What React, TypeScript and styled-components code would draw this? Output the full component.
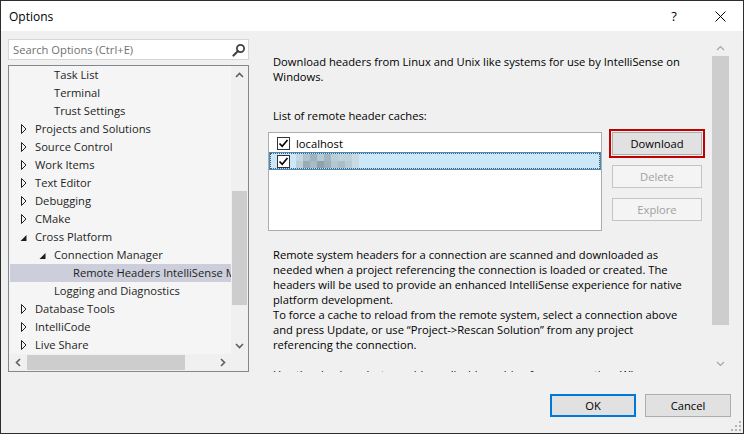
import React from 'react'
import styled, { createGlobalStyle } from 'styled-components'

const GlobalStyle = createGlobalStyle`
  html, body {
    margin: 0;
    padding: 0;
    background: #f0f0f0;
  }
  body {
    font-family: "Open Sans", "Noto Sans", sans-serif;
    font-size: 11.2px;
    color: #000;
  }
  * {
    box-sizing: border-box;
  }
`

type TreeItem = {
  label: string
  level: number
  arrow?: 'open' | 'closed'
  selected?: boolean
}

const treeItems: TreeItem[] = [
  { label: 'Task List', level: 1 },
  { label: 'Terminal', level: 1 },
  { label: 'Trust Settings', level: 1 },
  { label: 'Projects and Solutions', level: 0, arrow: 'closed' },
  { label: 'Source Control', level: 0, arrow: 'closed' },
  { label: 'Work Items', level: 0, arrow: 'closed' },
  { label: 'Text Editor', level: 0, arrow: 'closed' },
  { label: 'Debugging', level: 0, arrow: 'closed' },
  { label: 'CMake', level: 0, arrow: 'closed' },
  { label: 'Cross Platform', level: 0, arrow: 'open' },
  { label: 'Connection Manager', level: 1, arrow: 'open' },
  { label: 'Remote Headers IntelliSense Manager', level: 2, selected: true },
  { label: 'Logging and Diagnostics', level: 1 },
  { label: 'Database Tools', level: 0, arrow: 'closed' },
  { label: 'IntelliCode', level: 0, arrow: 'closed' },
  { label: 'Live Share', level: 0, arrow: 'closed' },
]

// blurred host name, two rows of mosaic tiles
const mosaic = [
  '#c4d8e2', '#b0c4cf', '#9fb3be', '#b6cad4', '#a3b6c0', '#b9cdd7', '#c0d3dd', '#bdd1db', '#c6dae4',
  '#bccfd9', '#98acb7', '#a8bcc6', '#8fa3ae', '#9db1bc', '#b3c7d1', '#aabec8', '#b8ccd6', '#c8dbe5',
]

const App: React.FC = () => {
  return (
    <>
      <GlobalStyle />
      <Window>
        <TitleBar>
          <Title>Options</Title>
          <CaptionButton>?</CaptionButton>
          <CaptionButton>
            <svg width="11" height="11" viewBox="0 0 11 11">
              <path d="M0.5 0.5 L10.5 10.5 M10.5 0.5 L0.5 10.5" stroke="#000" strokeWidth="1" />
            </svg>
          </CaptionButton>
        </TitleBar>

        <Main>
          <LeftColumn>
            <SearchBox>
              <SearchText>Search Options (Ctrl+E)</SearchText>
              <svg width="14" height="14" viewBox="0 0 14 14">
                <circle cx="8.5" cy="5.5" r="3.6" fill="none" stroke="#424242" strokeWidth="1.8" />
                <path d="M6 8 L1.5 12.5" stroke="#424242" strokeWidth="2.2" strokeLinecap="round" />
              </svg>
            </SearchBox>

            <Tree>
              <TreeRows>
                {treeItems.map((it) => (
                  <TreeRow key={it.label} $level={it.level} $selected={!!it.selected}>
                    <ArrowBox>
                      {it.arrow === 'closed' && (
                        <svg width="16" height="18" viewBox="0 0 16 18">
                          <path d="M2.5 4.5 L7 9 L2.5 13.5 Z" fill="none" stroke="#1e1e1e" strokeWidth="1" />
                        </svg>
                      )}
                      {it.arrow === 'open' && (
                        <svg width="16" height="18" viewBox="0 0 16 18">
                          <path d="M7.5 7 L7.5 13 L1.5 13 Z" fill="#1e1e1e" />
                        </svg>
                      )}
                    </ArrowBox>
                    <TreeLabel>{it.label}</TreeLabel>
                  </TreeRow>
                ))}
              </TreeRows>

              <VScroll>
                <ScrollBtn>
                  <svg width="9" height="6" viewBox="0 0 9 6">
                    <path d="M1 5 L4.5 1.5 L8 5" fill="none" stroke="#606060" strokeWidth="1.6" />
                  </svg>
                </ScrollBtn>
                <VTrack>
                  <VThumb $offset={108} $size={114} />
                </VTrack>
                <ScrollBtn>
                  <svg width="9" height="6" viewBox="0 0 9 6">
                    <path d="M1 1 L4.5 4.5 L8 1" fill="none" stroke="#606060" strokeWidth="1.6" />
                  </svg>
                </ScrollBtn>
              </VScroll>

              <HScroll>
                <ScrollBtn>
                  <svg width="6" height="9" viewBox="0 0 6 9">
                    <path d="M5 1 L1.5 4.5 L5 8" fill="none" stroke="#606060" strokeWidth="1.6" />
                  </svg>
                </ScrollBtn>
                <HTrack>
                  <HThumb $offset={1} $size={158} />
                </HTrack>
                <ScrollBtn>
                  <svg width="6" height="9" viewBox="0 0 6 9">
                    <path d="M1 1 L4.5 4.5 L1 8" fill="none" stroke="#606060" strokeWidth="1.6" />
                  </svg>
                </ScrollBtn>
              </HScroll>
              <Corner />
            </Tree>
          </LeftColumn>

          <RightPanel>
            <Content>
              <Para>
                Download headers from Linux and Unix like systems for use by IntelliSense on
                <br />
                Windows.
              </Para>
              <Label>List of remote header caches:</Label>

              <ListArea>
                <ListBox>
                  <ListRow>
                    <CheckBox>
                      <svg width="11" height="11" viewBox="0 0 11 11">
                        <path d="M1.5 5.5 L4.2 8.3 L9.5 2" fill="none" stroke="#000" strokeWidth="1.6" />
                      </svg>
                    </CheckBox>
                    <span>localhost</span>
                  </ListRow>
                  <ListRow $selected>
                    <CheckBox>
                      <svg width="11" height="11" viewBox="0 0 11 11">
                        <path d="M1.5 5.5 L4.2 8.3 L9.5 2" fill="none" stroke="#000" strokeWidth="1.6" />
                      </svg>
                    </CheckBox>
                    <Mosaic>
                      {mosaic.map((c, i) => (
                        <Tile key={i} $c={c} />
                      ))}
                    </Mosaic>
                  </ListRow>
                </ListBox>

                <ButtonColumn>
                  <SideButton $highlight>Download</SideButton>
                  <SideButton $disabled>Delete</SideButton>
                  <SideButton $disabled>Explore</SideButton>
                </ButtonColumn>
              </ListArea>

              <Desc>
                Remote system headers for a connection are scanned and downloaded as
                <br />
                needed when a project referencing the connection is loaded or created. The
                <br />
                headers will be used to provide an enhanced IntelliSense experience for native
                <br />
                platform development.
                <br />
                To force a cache to reload from the remote system, select a connection above
                <br />
                and press Update, or use “Project-&gt;Rescan Solution” from any project
                <br />
                referencing the connection.
                <br />
                <br />
                Use the checkmarks to enable or disable caching for a connection. When
              </Desc>
            </Content>

            <RightScroll>
              <ScrollBtn>
                <svg width="9" height="6" viewBox="0 0 9 6">
                  <path d="M1 5 L4.5 1.5 L8 5" fill="none" stroke="#a6a6a6" strokeWidth="1.2" />
                </svg>
              </ScrollBtn>
              <VTrack>
                <RightThumb $offset={0} $size={269} />
              </VTrack>
              <ScrollBtn>
                <svg width="9" height="6" viewBox="0 0 9 6">
                  <path d="M1 1 L4.5 4.5 L8 1" fill="none" stroke="#a6a6a6" strokeWidth="1.2" />
                </svg>
              </ScrollBtn>
            </RightScroll>
          </RightPanel>
        </Main>

        <Footer>
          <DialogButton $default>OK</DialogButton>
          <DialogButton>Cancel</DialogButton>
        </Footer>

        <Grip>
          <svg width="12" height="12" viewBox="0 0 12 12">
            <rect x="9" y="1" width="2" height="2" fill="#b4b4b4" />
            <rect x="9" y="5" width="2" height="2" fill="#b4b4b4" />
            <rect x="5" y="5" width="2" height="2" fill="#b4b4b4" />
            <rect x="9" y="9" width="2" height="2" fill="#b4b4b4" />
            <rect x="5" y="9" width="2" height="2" fill="#b4b4b4" />
            <rect x="1" y="9" width="2" height="2" fill="#b4b4b4" />
          </svg>
        </Grip>
      </Window>
    </>
  )
}

export default App

const Window = styled.div`
  position: relative;
  width: 744px;
  height: 434px;
  border: 1px solid #2d2d2d;
  background: #f0f0f0;
  display: flex;
  flex-direction: column;
  overflow: hidden;
`

const TitleBar = styled.div`
  height: 30px;
  flex: none;
  background: #fff;
  display: flex;
  align-items: center;
`

const Title = styled.div`
  flex: 1;
  padding-left: 8px;
  font-size: 12px;
`

const CaptionButton = styled.div`
  width: 46px;
  height: 30px;
  display: flex;
  align-items: center;
  justify-content: center;
  font-size: 13px;
`

const Main = styled.div`
  display: flex;
  height: 341px;
  flex: none;
  padding: 8px 14px 0 7px;
  gap: 13px;
`

const LeftColumn = styled.div`
  width: 241px;
  display: flex;
  flex-direction: column;
  gap: 5px;
`

const SearchBox = styled.div`
  height: 21px;
  background: #fff;
  border: 1px solid #d6d6d6;
  display: flex;
  align-items: center;
  padding: 0 2px 0 4px;
`

const SearchText = styled.span`
  flex: 1;
  color: #717171;
`

const Tree = styled.div`
  height: 307px;
  border: 1px solid #828790;
  background: #f5f5f5;
  display: grid;
  grid-template-columns: 1fr 17px;
  grid-template-rows: 1fr 17px;
`

const TreeRows = styled.div`
  overflow: hidden;
`

const TreeRow = styled.div<{ $level: number; $selected: boolean }>`
  height: 18px;
  display: flex;
  align-items: center;
  white-space: nowrap;
  padding-left: ${(p) => 9 + p.$level * 19}px;
  margin-left: 1px;
  color: #1e1e1e;
  background: ${(p) => (p.$selected ? '#cccedb' : 'transparent')};
`

const ArrowBox = styled.div`
  width: 16px;
  height: 18px;
  flex: none;
`

const TreeLabel = styled.span`
  line-height: 18px;
`

const ScrollBtn = styled.div`
  width: 17px;
  height: 17px;
  flex: none;
  display: flex;
  align-items: center;
  justify-content: center;
`

const VScroll = styled.div`
  background: #f0f0f0;
  display: flex;
  flex-direction: column;
`

const VTrack = styled.div`
  flex: 1;
  position: relative;
`

const VThumb = styled.div<{ $offset: number; $size: number }>`
  margin: ${(p) => p.$offset}px 1px 0 1px;
  height: ${(p) => p.$size}px;
  background: #cdcdcd;
`

const HScroll = styled.div`
  background: #f0f0f0;
  display: flex;
`

const HTrack = styled.div`
  flex: 1;
  display: flex;
  align-items: center;
`

const HThumb = styled.div<{ $offset: number; $size: number }>`
  margin-left: ${(p) => p.$offset}px;
  width: ${(p) => p.$size}px;
  height: 15px;
  background: #cdcdcd;
`

const Corner = styled.div`
  background: #f0f0f0;
`

const RightPanel = styled.div`
  flex: 1;
  height: 333px;
  display: flex;
`

const Content = styled.div`
  flex: 1;
  overflow: hidden;
  padding: 15px 0 0 11px;
  line-height: 15px;
`

const Para = styled.div`
  white-space: nowrap;
`

const Label = styled.div`
  margin-top: 24px;
  white-space: nowrap;
`

const ListArea = styled.div`
  display: flex;
  gap: 10px;
  margin: 9px 0 0 -5px;
`

const ListBox = styled.div`
  width: 334px;
  height: 99px;
  border: 1px solid #acacac;
  background: #fff;
  padding-top: 1px;
`

const ListRow = styled.div<{ $selected?: boolean }>`
  height: 18px;
  display: flex;
  align-items: center;
  gap: 6px;
  padding-left: 7px;
  border: 1px solid ${(p) => (p.$selected ? '#3f8fc6' : 'transparent')};
  outline: ${(p) => (p.$selected ? '1px dotted #555' : 'none')};
  outline-offset: -2px;
  background: ${(p) => (p.$selected ? '#cce8f7' : 'transparent')};
`

const CheckBox = styled.div`
  width: 13px;
  height: 13px;
  border: 1px solid #333;
  background: #fff;
  display: flex;
  align-items: center;
  justify-content: center;
`

const Mosaic = styled.div`
  display: grid;
  grid-template-columns: repeat(9, 7px);
  grid-template-rows: repeat(2, 7px);
`

const Tile = styled.div<{ $c: string }>`
  background: ${(p) => p.$c};
`

const ButtonColumn = styled.div`
  display: flex;
  flex-direction: column;
  gap: 10px;
`

const SideButton = styled.div<{ $highlight?: boolean; $disabled?: boolean }>`
  width: 90px;
  height: 23px;
  display: flex;
  align-items: center;
  justify-content: center;
  background: ${(p) => (p.$disabled ? '#f4f4f4' : '#e1e1e1')};
  border: 1px solid ${(p) => (p.$disabled ? '#c4c4c4' : '#adadad')};
  color: ${(p) => (p.$disabled ? '#a0a0a0' : '#000')};
  outline: ${(p) => (p.$highlight ? '2px solid #c00000' : 'none')};
  outline-offset: 1px;
`

const Desc = styled.div`
  margin-top: 16px;
  white-space: nowrap;
`

const RightScroll = styled.div`
  width: 17px;
  display: flex;
  flex-direction: column;
`

const RightThumb = styled.div<{ $offset: number; $size: number }>`
  margin-top: ${(p) => p.$offset}px;
  height: ${(p) => p.$size}px;
  background: #cdcdcd;
`

const Footer = styled.div`
  flex: 1;
  display: flex;
  justify-content: flex-end;
  align-items: flex-start;
  gap: 9px;
  padding: 22px 12px 0 0;
`

const DialogButton = styled.div<{ $default?: boolean }>`
  width: 86px;
  height: 23px;
  display: flex;
  align-items: center;
  justify-content: center;
  background: #e1e1e1;
  border: ${(p) => (p.$default ? '2px solid #0078d7' : '1px solid #adadad')};
`

const Grip = styled.div`
  position: absolute;
  right: 1px;
  bottom: 1px;
  width: 12px;
  height: 12px;
  display: flex;
`
